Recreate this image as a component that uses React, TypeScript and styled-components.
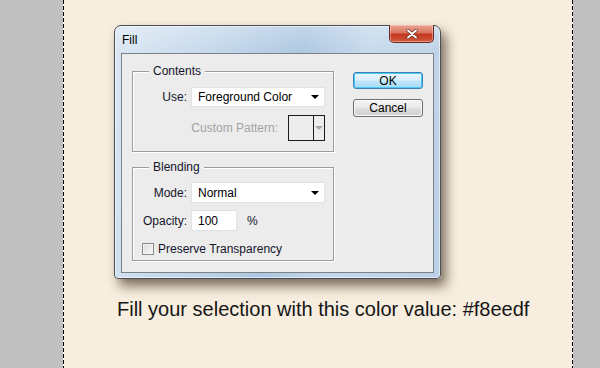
import { FC } from 'react';
import styled, { createGlobalStyle } from 'styled-components';

const GlobalStyle = createGlobalStyle`
  html, body {
    margin: 0;
    padding: 0;
    background: #c0c0c0;
  }
`;

const Page = styled.div`
  display: flex;
  width: 600px;
  height: 368px;
  overflow: hidden;
  font-family: 'Liberation Sans', Arial, sans-serif;
`;

const Side = styled.div<{ $width: number }>`
  width: ${(p) => p.$width}px;
  flex: none;
  background: #c0c0c0;
`;

const Rule = styled.div`
  width: 1px;
  flex: none;
  background: repeating-linear-gradient(to bottom, #000 0 4px, #fff 4px 6px);
`;

const Canvas = styled.div`
  flex: 1;
  display: flex;
  flex-direction: column;
  align-items: flex-start;
  padding: 25px 0 0 50px;
  background: #f8eedf;
`;

const Dialog = styled.div`
  position: relative;
  width: 327px;
  height: 254px;
  box-sizing: border-box;
  padding: 27px 6px 5px 6px;
  border: 1px solid #4a4f57;
  border-radius: 7px 7px 4px 4px;
  background:
    linear-gradient(to bottom, rgba(255, 255, 255, 0.25), rgba(255, 255, 255, 0) 28px),
    linear-gradient(100deg, #dbe7f3 0%, #c2d6ea 30%, #adc7e1 52%, #c6d9ec 70%, #bad0e6 100%);
  box-shadow:
    inset 0 0 0 1px rgba(255, 255, 255, 0.55),
    5px 7px 12px rgba(55, 38, 18, 0.65);
`;

const Title = styled.div`
  position: absolute;
  top: 7px;
  left: 7px;
  font-size: 12px;
  color: #000;
`;

const Close = styled.div`
  position: absolute;
  top: -1px;
  right: 6px;
  width: 45px;
  height: 18px;
  box-sizing: border-box;
  display: flex;
  align-items: center;
  justify-content: center;
  border: 1px solid #6b2a20;
  border-top: none;
  border-radius: 0 0 5px 5px;
  background: linear-gradient(to bottom, #e9a796 0%, #d9735c 45%, #c2381f 55%, #d25a3d 100%);
  box-shadow: inset 0 0 0 1px rgba(255, 220, 210, 0.45);
`;

const Panel = styled.div`
  height: 100%;
  box-sizing: border-box;
  display: flex;
  padding: 17px 0 0 10px;
  border: 1px solid #7d8288;
  background: #ececec;
  color: #14142a;
  font-size: 12px;
`;

const Groups = styled.div`
  width: 202px;
  display: flex;
  flex-direction: column;
  gap: 15px;
`;

const Group = styled.div<{ $pad: string }>`
  position: relative;
  padding: ${(p) => p.$pad};
  border: 1px solid #9c9c9c;
  box-shadow: inset 1px 1px 0 #fff, 1px 1px 0 #fff;
`;

const Legend = styled.span`
  position: absolute;
  top: -8px;
  left: 16px;
  padding: 0 4px;
  background: #ececec;
  line-height: 14px;
`;

const Row = styled.div<{ $gap: number; $mt?: number }>`
  display: flex;
  align-items: center;
  justify-content: flex-end;
  gap: ${(p) => p.$gap}px;
  margin-top: ${(p) => p.$mt ?? 0}px;
  padding-right: 8px;
`;

const FormRow = styled.div<{ $mt?: number }>`
  display: grid;
  grid-template-columns: 46px auto 1fr;
  align-items: center;
  column-gap: 4px;
  margin-top: ${(p) => p.$mt ?? 0}px;
`;

const Label = styled.span<{ $muted?: boolean }>`
  text-align: right;
  color: ${(p) => (p.$muted ? '#a3a3a3' : 'inherit')};
`;

const Select = styled.div<{ $h: number }>`
  width: 134px;
  height: ${(p) => p.$h}px;
  box-sizing: border-box;
  display: flex;
  align-items: center;
  justify-content: space-between;
  padding: 0 5px 0 6px;
  border: 1px solid #e2e2e2;
  background: #fff;
  color: #000;
`;

const Arrow = styled.span<{ $muted?: boolean }>`
  width: 0;
  height: 0;
  border-left: 4px solid transparent;
  border-right: 4px solid transparent;
  border-top: 4px solid ${(p) => (p.$muted ? '#a8a8a8' : '#000')};
`;

const Swatch = styled.div`
  width: 37px;
  height: 26px;
  box-sizing: border-box;
  display: flex;
  border: 1px solid #1a1a1a;
  background: #ececec;
`;

const SwatchFill = styled.div`
  flex: 1;
  border-right: 1px solid #1a1a1a;
`;

const SwatchArrow = styled.div`
  width: 10px;
  display: flex;
  align-items: center;
  justify-content: center;
`;

const Input = styled.div`
  width: 46px;
  height: 21px;
  box-sizing: border-box;
  display: flex;
  align-items: center;
  padding-left: 6px;
  border: 1px solid #e2e2e2;
  background: #fff;
  color: #000;
`;

const Percent = styled.span`
  margin-left: 6px;
`;

const Check = styled.label`
  display: flex;
  align-items: center;
  gap: 4px;
  margin: 11px 0 0 1px;
  height: 13px;
`;

const Box = styled.span`
  width: 12px;
  height: 12px;
  box-sizing: border-box;
  border: 1px solid #8a8a8a;
  background: linear-gradient(135deg, #dcdcdc, #f8f8f8);
  box-shadow: inset 0 0 0 1px #f4f4f4;
`;

const Buttons = styled.div`
  display: flex;
  flex-direction: column;
  gap: 10px;
  margin-left: 19px;
  padding-top: 1px;
`;

const Btn = styled.div<{ $primary?: boolean }>`
  width: 70px;
  height: ${(p) => (p.$primary ? 17 : 18)}px;
  box-sizing: border-box;
  display: flex;
  align-items: center;
  justify-content: center;
  border: 1px solid ${(p) => (p.$primary ? '#3c7fb1' : '#707070')};
  border-radius: 3px;
  color: #000;
  font-size: 12px;
  background: ${(p) =>
    p.$primary
      ? 'linear-gradient(to bottom, #eaf6fd 0%, #d9f0fc 45%, #bee6fd 55%, #a7d9f5 100%)'
      : 'linear-gradient(to bottom, #f2f2f2 0%, #ebebeb 45%, #dddddd 55%, #cfcfcf 100%)'};
  box-shadow: inset 0 0 0 1px ${(p) => (p.$primary ? '#48c9f6' : '#fbfbfb')};
`;

const Caption = styled.div`
  margin: 19px 0 0 3px;
  font-size: 20px;
  line-height: 22px;
  color: #161616;
`;

const App: FC = () => {
  return (
    <>
      <GlobalStyle />
      <Page>
        <Side $width={63} />
        <Rule />
        <Canvas>
          <Dialog>
            <Title>Fill</Title>
            <Close>
              <svg width='12' height='10' viewBox='0 0 12 10'>
                <path d='M2 1.5 L10 8.5 M10 1.5 L2 8.5' stroke='#5a1d14' strokeWidth='3.2' strokeLinecap='round' />
                <path d='M2 1.5 L10 8.5 M10 1.5 L2 8.5' stroke='#fff' strokeWidth='2' strokeLinecap='round' />
              </svg>
            </Close>
            <Panel>
              <Groups>
                <Group $pad='15px 0 10px 0'>
                  <Legend>Contents</Legend>
                  <Row $gap={4}>
                    <Label>Use:</Label>
                    <Select $h={20}>
                      Foreground Color <Arrow />
                    </Select>
                  </Row>
                  <Row $gap={10} $mt={8}>
                    <Label $muted>Custom Pattern:</Label>
                    <Swatch>
                      <SwatchFill />
                      <SwatchArrow>
                        <Arrow $muted />
                      </SwatchArrow>
                    </Swatch>
                  </Row>
                </Group>
                <Group $pad='14px 8px 5px 8px'>
                  <Legend>Blending</Legend>
                  <FormRow>
                    <Label>Mode:</Label>
                    <Select $h={21}>
                      Normal <Arrow />
                    </Select>
                  </FormRow>
                  <FormRow $mt={7}>
                    <Label>Opacity:</Label>
                    <Input>100</Input>
                    <Percent>%</Percent>
                  </FormRow>
                  <Check>
                    <Box />
                    Preserve Transparency
                  </Check>
                </Group>
              </Groups>
              <Buttons>
                <Btn $primary>OK</Btn>
                <Btn>Cancel</Btn>
              </Buttons>
            </Panel>
          </Dialog>
          <Caption>Fill your selection with this color value: #f8eedf</Caption>
        </Canvas>
        <Rule />
        <Side $width={27} />
      </Page>
    </>
  );
};

export default App;
